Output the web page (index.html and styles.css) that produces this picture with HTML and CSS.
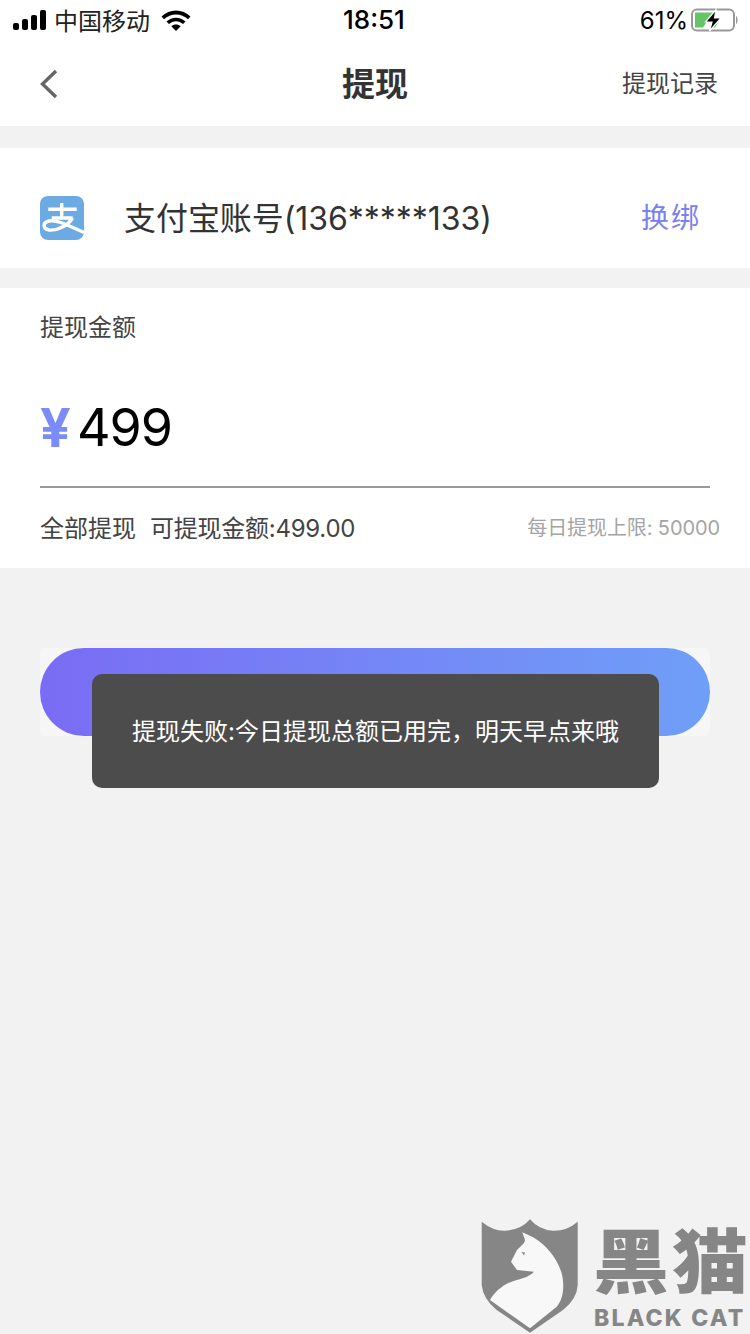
FILE: index.html
```html
<!DOCTYPE html>
<html lang="zh-CN">
<head>
    <meta charset="UTF-8">
    <meta name="viewport" content="width=device-width, initial-scale=1.0">
    <title>提现</title>
    <link rel="stylesheet" href="styles.css">
</head>
<body>

    <div class="page">
        <div class="status-bar">
            <div class="status-left">
                <svg class="signal" width="34" height="20" viewBox="0 0 34 20">
                    <rect x="0" y="13" width="6" height="7" rx="2"/>
                    <rect x="9" y="9" width="6" height="11" rx="2"/>
                    <rect x="18" y="5" width="6" height="15" rx="2"/>
                    <rect x="27" y="0" width="6" height="20" rx="2"/>
                </svg>
                <span class="carrier">中国移动</span>
                <svg class="wifi" width="30" height="22" viewBox="0 0 30 22">
                    <path d="M0.5 7.5 C8.5 -0.5 21.5 -0.5 29.5 7.5 L27 10.2 C20.5 3.8 9.5 3.8 3 10.2 Z"/>
                    <path d="M5.5 12.5 C10.8 7.4 19.2 7.4 24.5 12.5 L22 15.1 C17.8 11.2 12.2 11.2 8 15.1 Z"/>
                    <path d="M10.3 17.2 C13 14.8 17 14.8 19.7 17.2 L15 22 Z"/>
                </svg>
            </div>
            <div class="status-time">18:51</div>
            <div class="status-right">
                <span class="battery-pct">61%</span>
                <svg class="battery" width="48" height="24" viewBox="0 0 48 24">
                    <rect x="1" y="1.5" width="42" height="21" rx="5" fill="none" stroke="#999" stroke-width="2"/>
                    <path d="M45 8 C47 9 47 15 45 16 Z" fill="#999"/>
                    <path d="M4 4.5 H22 L12 19.5 H4 Z" fill="#65c466"/>
                    <path d="M19 19.5 L24 13 H28 L24 19.5 Z" fill="#65c466"/>
                    <path d="M25 1.5 L14.5 14 H21 L18.5 23 L30 10 H23.5 Z" fill="#000" stroke="#fff" stroke-width="1.2"/>
                </svg>
            </div>
        </div>

        <div class="nav-bar">
            <svg class="back" width="20" height="30" viewBox="0 0 20 30">
                <path d="M17 2 L3.5 15 L17 28" fill="none" stroke="#666" stroke-width="3.4"/>
            </svg>
            <h1 class="nav-title">提现</h1>
            <span class="nav-link">提现记录</span>
        </div>

        <div class="account card">
            <svg class="alipay" width="44" height="44" viewBox="0 0 44 44">
                <rect width="44" height="44" rx="8" fill="#6caae4"/>
                <path d="M8.3 13.3 H36.7 M21.7 7 V22 M11.7 22 H32.7" fill="none" stroke="#fff" stroke-width="3.4"/>
                <path d="M32.7 22 C28 29 18 35 9 34 C3 33 2 26.5 9 25 C18 23.5 29 30 44 36.5" fill="none" stroke="#fff" stroke-width="3.4"/>
            </svg>
            <span class="account-name">支付宝账号(136*****133)</span>
            <span class="rebind">换绑</span>
        </div>

        <div class="amount card">
            <div class="amount-label">提现金额</div>
            <div class="amount-input">
                <span class="yen">¥</span>
                <span class="amount-value">499</span>
            </div>
            <div class="amount-foot">
                <span class="withdraw-all">全部提现</span>
                <span class="available">可提现金额:499.00</span>
                <span class="limit">每日提现上限: 50000</span>
            </div>
        </div>

        <div class="submit-wrap">
            <div class="submit"></div>
        </div>

        <div class="toast">提现失败:今日提现总额已用完，明天早点来哦</div>

        <div class="watermark">
            <svg class="shield" width="98" height="115" viewBox="0 0 98 115">
                <path d="M0.7 2.7 Q12 12 24 11.7 Q40 11 49 0.3 Q58 11 72 11.7 Q86 12 96.7 2.7 V66 Q96 80 82 91 L49 113.7 L15.7 91 Q2 80 0.7 66 Z" fill="#868686"/>
                <path d="M41.3 13.3 L47.3 16 C62 22 76 38 80.7 54.3 C84 68 82 80 75.7 87.7 L49 109.3 L9 81 C14 72 24 64 35.7 61 C44 59 50 56 53 52.7 L36 51 L30 42.7 L36 31 C40 27 44 24 44 21 Z" fill="#f8f8f8"/>
                <path d="M40.5 33 L44 33.5 L43 36.5 Z" fill="#868686"/>
            </svg>
            <div class="brand">
                <div class="brand-cn">黑猫</div>
                <div class="brand-en">BLACK CAT</div>
            </div>
        </div>
    </div>

</body>
</html>
```

FILE: styles.css
```css
* {
    box-sizing: border-box;
}
html, body {
    margin: 0;
    padding: 0;
}
body {
    font-family: Inter, "Noto Sans CJK SC", sans-serif;
    background-color: #f2f2f2;
}
.page {
    position: relative;
    width: 750px;
    height: 1334px;
    overflow: hidden;
}
.status-bar {
    height: 40px;
    background: #ffffff;
    display: flex;
    align-items: center;
    justify-content: space-between;
    padding: 0 11px 0 13px;
    color: #000;
    position: relative;
}
.status-left {
    display: flex;
    align-items: center;
    gap: 7px;
}
.carrier {
    font-size: 24px;
    color: #222;
    margin-bottom: 2px;
}
.wifi {
    margin-left: 4px;
}
.status-time {
    position: absolute;
    left: 343px;
    top: 5px;
    font-size: 26px;
    line-height: 30px;
    font-weight: 500;
}
.status-right {
    display: flex;
    align-items: center;
    gap: 3px;
}
.battery-pct {
    font-size: 24px;
}
.nav-bar {
    height: 86px;
    background: #ffffff;
    display: flex;
    align-items: center;
    justify-content: space-between;
    padding: 0 32px 0 39px;
    position: relative;
}
.back {
    margin-top: 1px;
}
.nav-title {
    position: absolute;
    left: 0;
    right: 0;
    margin: 1px 0 0;
    text-align: center;
    font-size: 33px;
    line-height: 48px;
    font-weight: 700;
    color: #333;
}
.nav-link {
    font-size: 24px;
    color: #444;
    margin-bottom: 4px;
}
.card {
    background: #ffffff;
}
.account {
    margin-top: 22px;
    height: 120px;
    display: flex;
    align-items: center;
    padding: 20px 49px 0 40px;
}
.account-name {
    margin: 0 0 4px 40px;
    font-size: 32px;
    color: #333;
    flex: 1;
    letter-spacing: -0.05px;
}
.rebind {
    margin-bottom: 4px;
    font-size: 28px;
    letter-spacing: 2px;
    color: #7b80f0;
}
.amount {
    margin-top: 20px;
    height: 280px;
    padding: 0 30px 0 40px;
}
.amount-label {
    padding-top: 22px;
    font-size: 24px;
    line-height: 36px;
    color: #444;
}
.amount-input {
    margin-top: 40px;
    width: 670px;
    height: 102px;
    border-bottom: 2px solid #999;
    display: flex;
    align-items: flex-start;
}
.yen {
    font-size: 54px;
    line-height: 84px;
    font-weight: 700;
    color: #7b8cf8;
    width: 37px;
}
.amount-value {
    font-size: 52px;
    line-height: 84px;
    color: #000;
    letter-spacing: -1px;
}
.amount-foot {
    display: flex;
    align-items: center;
    height: 76px;
    font-size: 24px;
    color: #444;
}
.available {
    margin-left: 14px;
    flex: 1;
    letter-spacing: -0.25px;
}
.limit {
    font-size: 20px;
    color: #a5a5a5;
    letter-spacing: -0.1px;
}
.submit-wrap {
    margin: 80px 40px 0;
    background: #f6f6f6;
    border-radius: 6px;
}
.submit {
    height: 88px;
    border-radius: 44px;
    background: linear-gradient(90deg, #7a6cf4, #6f9ff8);
}
.toast {
    position: absolute;
    left: 92px;
    top: 674px;
    width: 567px;
    height: 114px;
    border-radius: 10px;
    background: #4c4c4c;
    color: #ffffff;
    font-size: 24px;
    display: flex;
    align-items: center;
    justify-content: center;
    padding-bottom: 4px;
}
.watermark {
    position: absolute;
    left: 481px;
    top: 1219px;
    display: flex;
    gap: 14px;
}
.brand {
    color: #868686;
}
.brand-cn {
    font-family: "Liberation Sans", "Noto Sans CJK SC", sans-serif;
    font-size: 76px;
    line-height: 76px;
    font-weight: 900;
    margin-top: 7px;
    letter-spacing: 3px;
    white-space: nowrap;
    transform: scaleY(0.93);
}
.brand-en {
    font-size: 23px;
    line-height: 24px;
    font-weight: 800;
    margin: 4px 0 0 1px;
    letter-spacing: 2.2px;
    white-space: nowrap;
}
```
